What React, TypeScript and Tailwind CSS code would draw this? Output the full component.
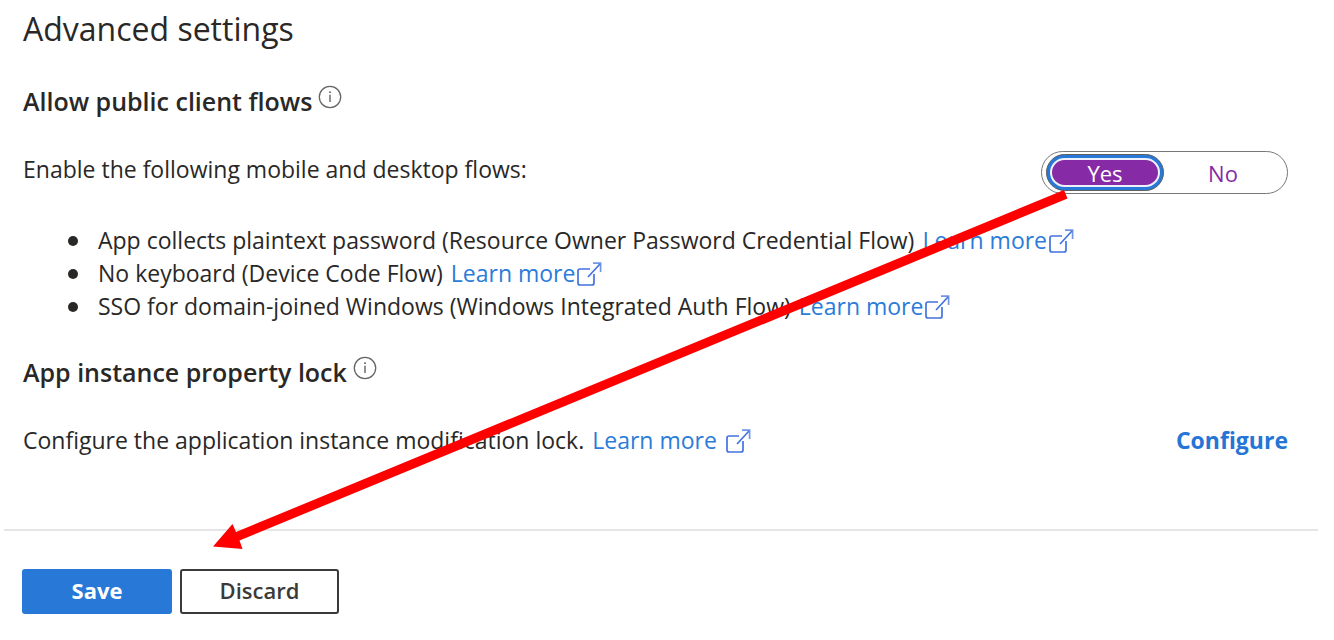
import { useState } from "react";

function InfoIcon() {
  return (
    <svg viewBox="0 0 24 24" className="size-6" fill="none" aria-hidden="true">
      <circle cx="12" cy="12" r="10.7" stroke="#666" strokeWidth="1.3" />
      <path d="M12 9.7v7.3" stroke="#555" strokeWidth="1.3" />
      <circle cx="12" cy="7.2" r="0.9" fill="#555" />
    </svg>
  );
}

function ExternalIcon() {
  return (
    <svg viewBox="0 0 26 26" className="size-[26px] shrink-0" fill="none" stroke="#4372e0" strokeWidth="1.7" aria-hidden="true">
      <path d="M14 8H4Q2 8 2 10v12Q2 24 4 24H16Q18 24 18 22V13" />
      <path d="M17 2.2H24.6V11" strokeOpacity=".75" />
      <path d="M24 3L12 16" />
    </svg>
  );
}

function LearnMore({ spaced = false }: { spaced?: boolean }) {
  return (
    <a href="#learn-more" className={`flex items-center text-[#2b7cd9] ${spaced ? "gap-2" : "gap-px"}`}>
      Learn more
      <ExternalIcon />
    </a>
  );
}

function SectionHeading({ children }: { children: string }) {
  return (
    <div className="flex h-8 items-center gap-1.5">
      <h2 className="text-[25px] leading-8 font-semibold">{children}</h2>
      <button type="button" aria-label={`About: ${children}`} className="mb-2">
        <InfoIcon />
      </button>
    </div>
  );
}

function Choice({ label, selected, onSelect }: { label: string; selected: boolean; onSelect: () => void }) {
  return (
    <label
      className={`flex h-[37px] w-[118px] cursor-pointer rounded-full border ${
        selected ? "border-[#5f5f5f] bg-[#2878d8] p-[3px] text-white" : "border-transparent p-[3px] text-[#862ba5]"
      }`}
    >
      <input type="radio" name="flows" className="sr-only" checked={selected} onChange={onSelect} />
      <span
        className={`flex flex-1 items-center justify-center rounded-full border-2 ${
          selected ? "border-[#eef0fb] bg-[#862ba5]" : "border-transparent"
        }`}
      >
        {label}
      </span>
    </label>
  );
}

const flows = [
  "App collects plaintext password (Resource Owner Password Credential Flow)",
  "No keyboard (Device Code Flow)",
  "SSO for domain-joined Windows (Windows Integrated Auth Flow)",
];

export default function App() {
  const [enabled, setEnabled] = useState(true);
  return (
    <main className="relative bg-white pt-[7px] pr-4 pb-6 pl-1 font-['Open_Sans',sans-serif] text-[23px] leading-[33px] text-[#292827]">
      <div className="pr-[30px] pl-[19px]">
        <h1 className="text-[32px] leading-[44px]">Advanced settings</h1>
        <section className="mt-[34px]">
          <SectionHeading>Allow public client flows</SectionHeading>
          <div className="mt-[34px] flex items-center justify-between">
            <p id="flows-label" className="pb-1.5">Enable the following mobile and desktop flows:</p>
            <div
              role="radiogroup"
              aria-labelledby="flows-label"
              className="flex h-[43px] w-[247px] items-center rounded-full border border-[#777] pl-1 text-[22px] leading-6"
            >
              <Choice label="Yes" selected={enabled} onSelect={() => setEnabled(true)} />
              <Choice label="No" selected={!enabled} onSelect={() => setEnabled(false)} />
            </div>
          </div>
          <ul className="mt-[30px] pl-[45px]">
            {flows.map((flow) => (
              <li key={flow} className="flex items-center">
                <span className="mr-5 size-[10px] shrink-0 rounded-full bg-[#292827]" />
                <span className="mr-2">{flow}</span>
                <LearnMore />
              </li>
            ))}
          </ul>
        </section>
        <section className="mt-[33px]">
          <SectionHeading>App instance property lock</SectionHeading>
          <div className="mt-9 flex items-center justify-between">
            <p className="flex gap-2">
              Configure the application instance modification lock.
              <LearnMore spaced />
            </p>
            <a href="#configure" className="font-bold text-[#2475d6]">Configure</a>
          </div>
        </section>
      </div>
      <footer className="mt-[72px] flex gap-2 border-t-2 border-[#e5e5e5] pt-[38px] pl-[18px] text-[22px] leading-7">
        <button type="button" className="h-[45px] w-[150px] rounded-[3px] bg-[#2878d7] pb-1 font-bold text-white">Save</button>
        <button type="button" className="h-[45px] w-[159px] rounded-[3px] border-2 border-[#3b3a39] bg-white pb-1 font-semibold text-[#3b3a39]">Discard</button>
      </footer>
      <svg viewBox="0 0 860 364" className="pointer-events-none absolute top-[188px] left-[210px] h-[364px] w-[860px]" aria-hidden="true">
        <path d="M854 2L857.5 10.5L29.5 352.5L32.5 361L3 358.5L22.5 336L26 344Z" fill="#ff0000" />
      </svg>
    </main>
  );
}
